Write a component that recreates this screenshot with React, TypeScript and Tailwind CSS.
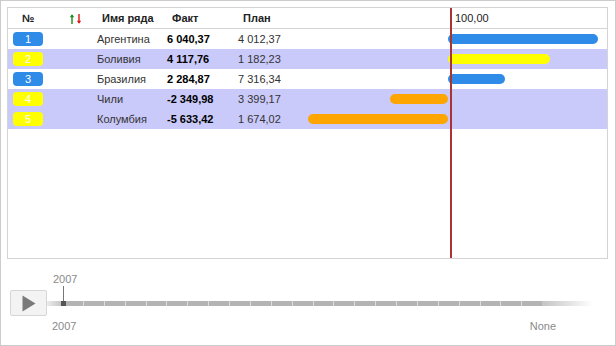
type Row = {
  n: number
  badge: string
  name: string
  fact: string
  plan: string
  bar: number
  color: string
  shaded: boolean
}

const rows: Row[] = [
  { n: 1, badge: 'bg-[#2e8be8]', name: 'Аргентина', fact: '6 040,37', plan: '4 012,37', bar: 150, color: '#2e8be8', shaded: false },
  { n: 2, badge: 'bg-[#ffff00]', name: 'Боливия', fact: '4 117,76', plan: '1 182,23', bar: 102, color: '#ffff00', shaded: true },
  { n: 3, badge: 'bg-[#2e8be8]', name: 'Бразилия', fact: '2 284,87', plan: '7 316,34', bar: 57, color: '#2e8be8', shaded: false },
  { n: 4, badge: 'bg-[#ffff00]', name: 'Чили', fact: '-2 349,98', plan: '3 399,17', bar: -58, color: '#ffa500', shaded: true },
  { n: 5, badge: 'bg-[#ffff00]', name: 'Колумбия', fact: '-5 633,42', plan: '1 674,02', bar: -140, color: '#ffa500', shaded: true },
]

// zero point of the bar chart inside the chart column
const ZERO = 158

function SortArrows() {
  return (
    <svg width="14" height="12" viewBox="0 0 14 12">
      <path d="M3 11V2" stroke="#1a8a1a" strokeWidth="1.4" />
      <path d="M0.8 4.2L3 1.2L5.2 4.2Z" fill="#1a8a1a" />
      <path d="M10 1v9" stroke="#e01818" strokeWidth="1.4" />
      <path d="M7.8 7.8L10 10.8L12.2 7.8Z" fill="#e01818" />
    </svg>
  )
}

function Timeline() {
  const segments = Array.from({ length: 23 }, (_, i) => i)
  return (
    <div className="flex flex-col text-[11px] leading-[13px] text-[#8a8a8a]">
      <div className="mt-[14px] h-[13px] pl-[52px]">2007</div>
      <div className="mt-[4px] flex h-[26px] items-center">
        <div className="ml-[9px] flex h-[26px] w-[37px] items-center justify-center rounded-[2px] border border-[#d6d6d6] bg-[#f3f3f3]">
          <svg width="14" height="17" viewBox="0 0 14 17">
            <path d="M0.5 0.5L13.5 8.5L0.5 16.5Z" fill="#7a7a7a" />
          </svg>
        </div>
        <div className="h-[5px] w-[16px] bg-gradient-to-r from-[#ececec] to-[#c2c2c2]" />
        <div className="relative flex h-[5px] w-[479px]">
          {segments.map((i) => (
            <div
              key={i}
              className={i === 0 ? 'flex-1 bg-[#b4b4b4]' : 'flex-1 border-l border-[#dcdcdc] bg-[#b4b4b4]'}
            />
          ))}
          <div className="absolute left-[-2px] top-0 h-[5px] w-[5px] bg-[#555555]">
            <div className="absolute bottom-full left-[2px] h-[15px] w-px bg-[#777777]" />
          </div>
        </div>
        <div className="h-[5px] w-[51px] bg-gradient-to-r from-[#c4c4c4] to-white" />
      </div>
      <div className="mt-[4px] flex h-[13px] justify-between pl-[51px] pr-[59px]">
        <span>2007</span>
        <span>None</span>
      </div>
    </div>
  )
}

export default function App() {
  return (
    <div
      className="h-[346px] w-[616px] border border-[#cccccc] bg-white"
      style={{ fontFamily: '"Liberation Sans", Arial, sans-serif' }}
    >
      <div className="relative ml-[6px] mt-[6px] h-[252px] w-[601px] border border-[#d4d4d4] bg-white">
        {/* header */}
        <div className="flex h-[21px] items-center border-b border-[#d4d4d4] text-[11px] text-[#222]">
          <div className="flex w-[89px] items-center">
            <span className="ml-[14px] font-bold">№</span>
            <span className="ml-[35px] mt-[1px] flex">
              <SortArrows />
            </span>
          </div>
          <div className="w-[70px] pl-[5px] font-bold">Имя ряда</div>
          <div className="w-[71px] pl-[5px] font-bold">Факт</div>
          <div className="w-[52px] pl-[5px] font-bold">План</div>
          <div className="flex-1 pl-[165px]">100,00</div>
        </div>

        {/* rows */}
        {rows.map((r) => (
          <div
            key={r.n}
            className={
              r.shaded
                ? 'flex h-[20px] items-center bg-[#c9c9fa] text-[11px] text-[#333]'
                : 'flex h-[20px] items-center bg-white text-[11px] text-[#333]'
            }
          >
            <div className="flex w-[89px] items-center">
              <div
                className={`ml-[5px] flex h-[14px] w-[30px] items-center justify-center rounded-[4px] text-white ${r.badge}`}
              >
                {r.n}
              </div>
            </div>
            <div className="w-[70px]">{r.name}</div>
            <div className="w-[71px] font-bold text-black">{r.fact}</div>
            <div className="w-[52px]">{r.plan}</div>
            <div className="flex flex-1 items-center">
              <div
                className="h-[10px] rounded-full"
                style={{
                  marginLeft: r.bar >= 0 ? ZERO : ZERO + r.bar,
                  width: Math.abs(r.bar),
                  backgroundColor: r.color,
                }}
              />
            </div>
          </div>
        ))}

        {/* reference line */}
        <div className="absolute bottom-0 left-[442px] top-0 w-[2px] bg-[#a83434]" />
      </div>
      <Timeline />
    </div>
  )
}
